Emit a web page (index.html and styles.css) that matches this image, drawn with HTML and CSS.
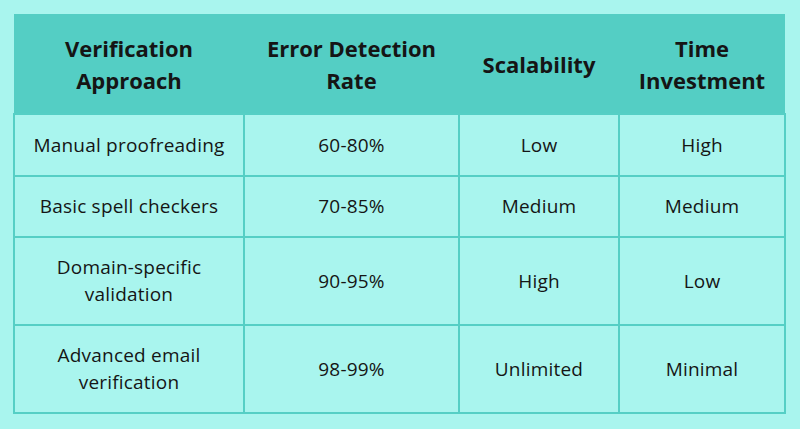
FILE: index.html
```html
<!DOCTYPE html>
<html>
<head>
<meta charset="utf-8">
<link rel="stylesheet" href="styles.css">
</head>
<body>
<div class="wrap">
<table class="cmp">
<colgroup>
<col class="c1"><col class="c2"><col class="c3"><col class="c4">
</colgroup>
<thead>
<tr class="head">
<th>Verification<br>Approach</th>
<th>Error Detection<br>Rate</th>
<th>Scalability</th>
<th>Time<br>Investment</th>
</tr>
</thead>
<tbody>
<tr class="r1"><td>Manual proofreading</td><td>60-80%</td><td>Low</td><td>High</td></tr>
<tr class="r2"><td>Basic spell checkers</td><td>70-85%</td><td>Medium</td><td>Medium</td></tr>
<tr class="r3"><td>Domain-specific<br>validation</td><td>90-95%</td><td>High</td><td>Low</td></tr>
<tr class="r4"><td>Advanced email<br>verification</td><td>98-99%</td><td>Unlimited</td><td>Minimal</td></tr>
</tbody>
</table>
</div>
</body>
</html>
```

FILE: styles.css
```css
html, body {
  margin: 0;
  padding: 0;
  background: #a9f5ee;
}
.wrap {
  padding: 14px 16px 0 13px;
}
.cmp {
  width: 771px;
  border-collapse: collapse;
  table-layout: fixed;
  font-family: "Open Sans", sans-serif;
  color: #151515;
}
.c1 { width: 230px; }
.c2 { width: 215px; }
.c3 { width: 160px; }
.c4 { width: 166px; }
.head {
  background: #54cec4;
  height: 100px;
}
.head th {
  font-weight: 700;
  font-size: 22px;
  line-height: 32px;
  padding: 0;
  text-align: center;
  vertical-align: middle;
}
tbody td {
  border: 2px solid #55cfc5;
  font-size: 19px;
  line-height: 27px;
  letter-spacing: 0.2px;
  text-align: center;
  vertical-align: middle;
  padding: 0;
}
.r1 { height: 62px; }
.r2 { height: 61px; }
.r3 { height: 88px; }
.r4 { height: 88px; }
```
